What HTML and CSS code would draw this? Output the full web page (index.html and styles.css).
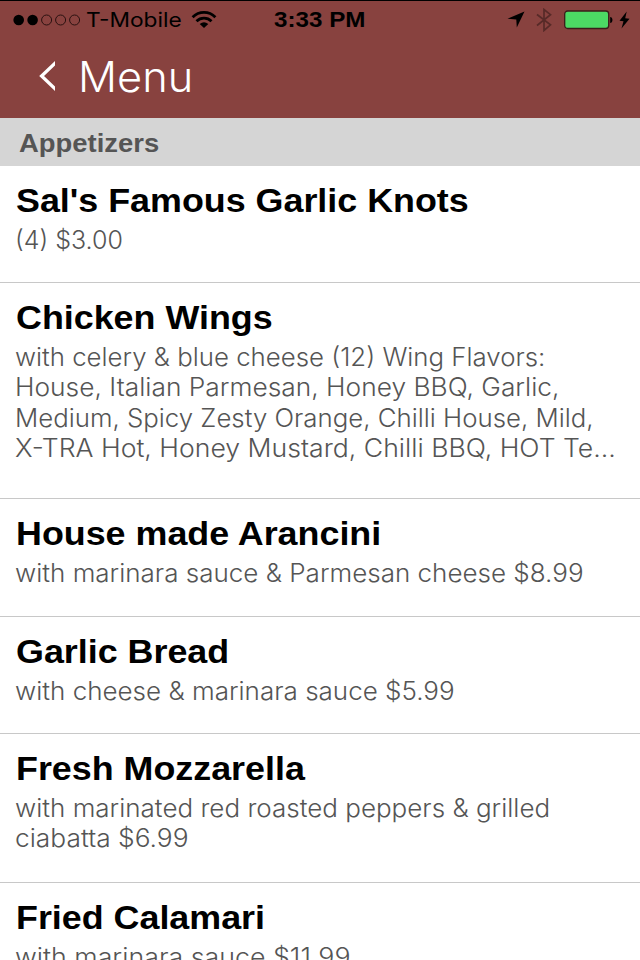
FILE: index.html
```
<!DOCTYPE html>
<html lang="en">
<head>
<meta charset="utf-8">
<title>Menu</title>
<link rel="stylesheet" href="styles.css">
</head>
<body>
<div class="screen">
  <header class="header">
    <div class="status">
      <div class="status-left">
        <svg class="dots" width="68" height="12" viewBox="0 0 68 12">
          <circle cx="5.7" cy="6" r="5.3"/><circle cx="19.6" cy="6" r="5.3"/>
          <g fill="none" stroke="#2a1110" stroke-width="1"><circle cx="33.6" cy="6" r="5"/><circle cx="47.6" cy="6" r="5"/><circle cx="61.6" cy="6" r="5"/></g>
        </svg>
        <span class="carrier">T-Mobile</span>
        <svg class="wifi" width="26" height="18" viewBox="0 0 26 18">
          <g fill="none" stroke="#000" stroke-width="2.8"><path d="M1.6 6.2C8-.2 18-.2 24.4 6.2"/><path d="M5.5 10.2c4.2-4 10.800-4 15 0"/></g>
          <path d="M8.700 13q4.300-3.400 8.600 0L13 17z"/>
        </svg>
      </div>
      <span class="clock">3:33 PM</span>
      <div class="status-right">
        <svg width="18" height="17" viewBox="0 0 18 17"><path d="M17.500.5 9.800 16.500 9.300 8.500.5 7.700z"/></svg>
        <svg class="bt" width="16" height="24" viewBox="0 0 16 24"><path d="M1 6.500 14.500 16.800 8 22.500V1.500l6.500 5.200L1 17.500" fill="none" stroke="#572a28" stroke-width="1.700"/></svg>
        <svg class="battery" width="49" height="20" viewBox="0 0 49 20"><rect x=".7" y="1" width="44" height="17.500" rx="3" fill="#4cd964" stroke="#3a1c1a" stroke-width="1.300"/><path d="M46.200 7c3 .4 3 5.600 0 6z"/></svg>
        <svg class="bolt" width="11" height="18" viewBox="0 0 11 18"><path d="M7.700.5.5 9.700l4 .5L2.500 17.500l8-9.800-4.300-.5z"/></svg>
      </div>
    </div>
    <div class="nav">
      <svg class="back" width="18" height="32" viewBox="0 0 18 32"><path d="M17 1v4.500L6 16l11 10.500V31L1.200 16z" fill="#fff"/></svg>
      <h1 class="title">Menu</h1>
    </div>
  </header>
  <h2 class="section"><span>Appetizers</span></h2>
  <ul class="list">
    <li class="item knots"><h3>Sal's Famous Garlic Knots</h3><p><span class="s0">(4) $3.00</span></p></li>
    <li class="item wings"><h3>Chicken Wings</h3><p><span class="s3">with celery &amp; blue cheese (12) Wing Flavors:</span><span class="s5">House, Italian Parmesan, Honey BBQ, Garlic,</span><span class="s3">Medium, Spicy Zesty Orange, Chilli House, Mild,</span><span class="s6">X-TRA Hot, Honey Mustard, Chilli BBQ, HOT Te…</span></p></li>
    <li class="item arancini"><h3>House made Arancini</h3><p><span class="s4">with marinara sauce &amp; Parmesan cheese $8.99</span></p></li>
    <li class="item bread"><h3>Garlic Bread</h3><p><span class="s4">with cheese &amp; marinara sauce $5.99</span></p></li>
    <li class="item mozzarella"><h3>Fresh Mozzarella</h3><p><span class="s4">with marinated red roasted peppers &amp; grilled</span><span class="s5">ciabatta $6.99</span></p></li>
    <li class="item calamari"><h3>Fried Calamari</h3><p><span class="s7">with marinara sauce $11.99</span></p></li>
  </ul>
</div>
</body>
</html>
```
FILE: styles.css
```
* { box-sizing: border-box; margin: 0; padding: 0; }
body { background: #fff; font-family: "Liberation Sans", sans-serif; }
.screen { width: 640px; height: 960px; overflow: hidden; }
svg { display: block; flex: none; }

.header { height: 118px; border-top: 1px solid #000; background: #88423f; }
.status { display: grid; grid-template-columns: 1fr 96px 1fr; height: 37px; align-items: center; padding: 0 10px 0 13px; }
.status-left { display: flex; align-items: center; }
.carrier { width: 95px; margin: 1px 0 0 5px; font: 400 20.3px/24px Inter, sans-serif; transform: scaleX(1.12); transform-origin: left; }
.wifi { margin-left: 10px; }
.clock { margin-top: 1px; font-size: 22px; font-weight: 700; line-height: 24px; white-space: nowrap; transform: scaleX(1.1); transform-origin: left; }
.status-right { display: flex; align-items: center; justify-content: flex-end; }
.bt { margin-left: 11px; }
.battery { margin-left: 12px; }
.bolt { margin-left: 6px; }

.nav { display: flex; align-items: center; height: 75px; padding-left: 38px; }
.title { margin: 2px 0 0 22px; font: 300 42.5px/52px Inter, sans-serif; color: #fff; transform: scaleX(1.02); transform-origin: left; }

.section { height: 48px; padding: 10px 0 0 19px; background: #d5d5d5; color: #555; font-size: 25.5px; line-height: 30px; }
.section span { display: inline-block; transform: scaleX(1.075); transform-origin: left; }

.list { list-style: none; }
.item { height: 117px; padding: 15px 0 0 15px; border-bottom: 1px solid #c8c8c8; }
.wings { height: 216px; }
.arancini { height: 118px; }
.mozzarella { height: 149px; }
.item h3 { margin-left: 1px; font-size: 33.5px; font-weight: 700; line-height: 40px; white-space: nowrap; transform: scaleX(1.07); transform-origin: left; }
.item p { margin-top: 4px; color: #555; font: 300 25px/30.33px Inter, sans-serif; }
.item span { display: block; width: max-content; white-space: nowrap; transform-origin: left; }
.s3 { transform: scaleX(1.032); }
.s4 { transform: scaleX(1.04); }
.s5 { transform: scaleX(1.053); }
.s6 { transform: scaleX(1.064); }
.s7 { transform: scaleX(1.07); }
```
